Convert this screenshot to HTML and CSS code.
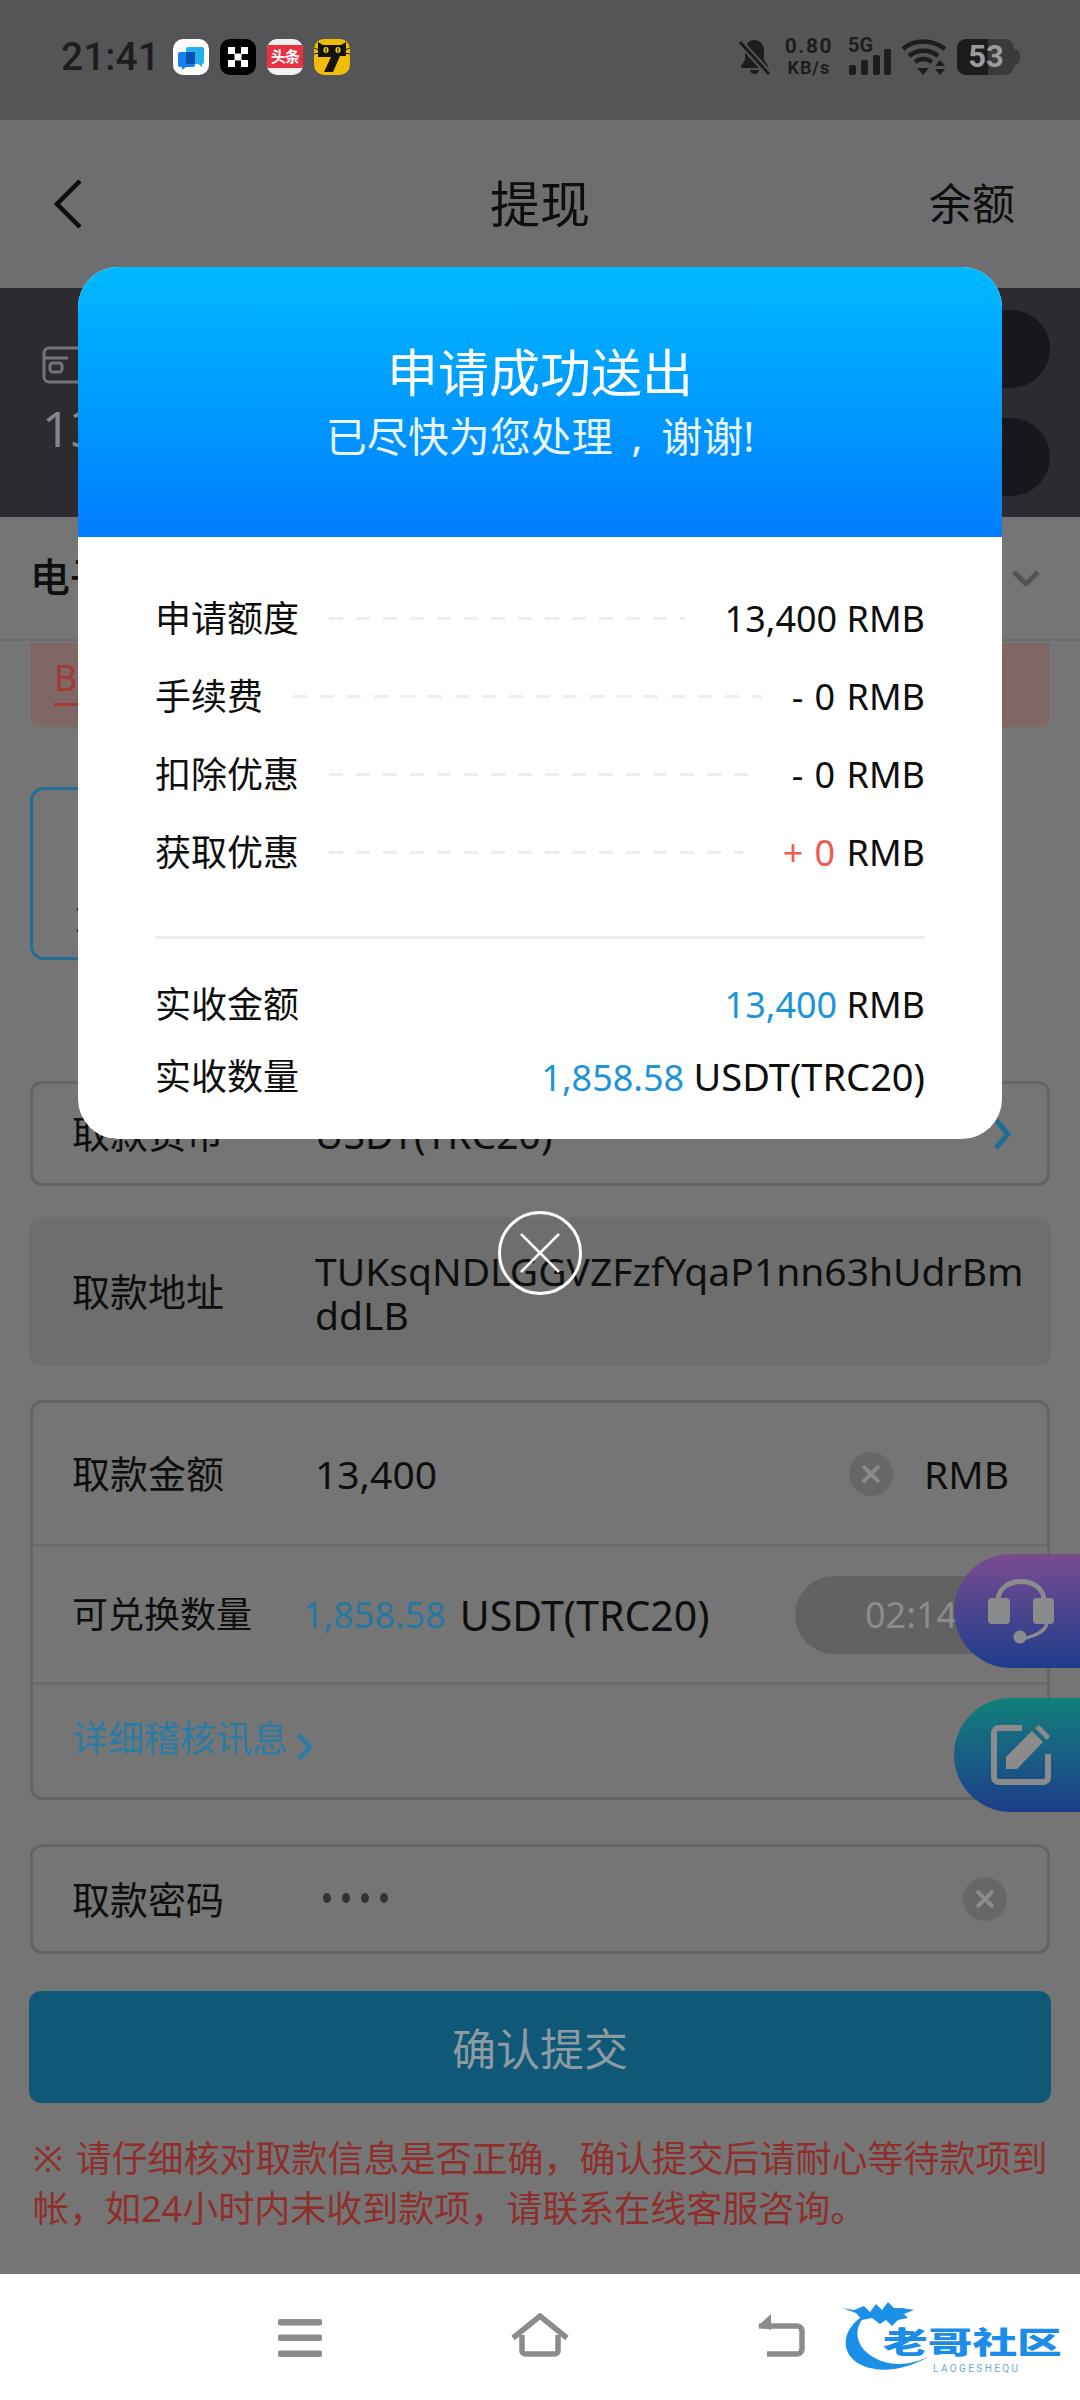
FILE: index.html

```html
<!DOCTYPE html>
<html lang="en">

<head>
  <meta charset="UTF-8">
  <meta name="viewport" content="width=device-width, initial-scale=1.0">
  <title>提现</title>
  <link rel="stylesheet" href="styles.css">
</head>

<body>
  <div class="phone">
    <div class="status-bar">
      <span class="time">21:41</span>
      <div class="app-icons">
        <div class="app-icon app-chat">
          <svg width="36" height="36" viewBox="0 0 36 36">
            <path d="M15 8h14a2 2 0 0 1 2 2v13a2 2 0 0 1-2 2v3l-4-3H15a2 2 0 0 1-2-2V10a2 2 0 0 1 2-2z" fill="#22b0ee"/>
            <path d="M7 13h13a2 2 0 0 1 2 2v11a2 2 0 0 1-2 2h-7l-4 3v-3H7a2 2 0 0 1-2-2V15a2 2 0 0 1 2-2z" fill="#1580f0"/>
            <path d="M13 13h9v12h-7a2 2 0 0 1-2-2z" fill="#0d4fb0"/>
          </svg>
        </div>
        <div class="app-icon app-okx">
          <svg width="36" height="36" viewBox="0 0 36 36" fill="#fff">
            <rect x="8" y="8" width="7" height="7"/>
            <rect x="21" y="8" width="7" height="7"/>
            <rect x="14.5" y="14.5" width="7" height="7"/>
            <rect x="8" y="21" width="7" height="7"/>
            <rect x="21" y="21" width="7" height="7"/>
          </svg>
        </div>
        <div class="app-icon app-news"><span class="news-band">头条</span></div>
        <div class="app-icon app-cat">
          <svg width="36" height="36" viewBox="0 0 36 36">
            <path d="M4 3l5 3h18l5-3v14h-6l-7 16H10l7-15H4z" fill="#16130c"/>
            <path d="M0 9l5 2M0 15l5-1M36 9l-5 2M36 15l-5-1" stroke="#16130c" stroke-width="1"/>
            <ellipse cx="12" cy="11" rx="2.6" ry="3" fill="#e9c62c"/>
            <ellipse cx="24" cy="11" rx="2.6" ry="3" fill="#e9c62c"/>
            <path d="M12 9v4M24 9v4" stroke="#16130c" stroke-width="1"/>
          </svg>
        </div>
      </div>
      <div class="status-right">
        <svg class="bell" width="33" height="36" viewBox="0 0 33 36">
          <path d="M16 1c-6 0-9 5-9 11v9l-4 6v2h27v-2l-4-6v-9c0-6-3-11-10-11z" fill="#1d1d1f"/>
          <path d="M12 31a4.5 4 0 0 0 9 0z" fill="#1d1d1f"/>
          <path d="M2 3l29 32" stroke="#555557" stroke-width="7"/>
          <path d="M2 3l29 32" stroke="#1d1d1f" stroke-width="3"/>
        </svg>
        <div class="net-speed"><span class="net-num">0.80</span><span class="net-unit">KB/s</span></div>
        <div class="signal">
          <span class="signal-label">5G</span>
          <svg width="42" height="26" viewBox="0 0 42 26" fill="#1d1d1f">
            <rect x="0" y="16" width="7" height="10" rx="2"/>
            <rect x="12" y="11" width="7" height="15" rx="2"/>
            <rect x="24" y="6" width="7" height="20" rx="2"/>
            <rect x="35" y="0" width="7" height="26" rx="2"/>
          </svg>
        </div>
        <svg class="wifi" width="46" height="36" viewBox="0 0 46 36" fill="none" stroke="#1d1d1f" stroke-width="4.5">
          <path d="M2 10c11-10 29-10 42 0"/>
          <path d="M8 17c8-7 21-7 29 0"/>
          <path d="M14 23c5-4 12-4 17 0"/>
          <path d="M16 29h12l-6 7z" fill="#1d1d1f" stroke="none"/>
          <path d="M34 27l5-6 5 6zM34 30l5 6 5-6z" fill="#1d1d1f" stroke="none"/>
        </svg>
        <div class="battery"><span class="battery-level"></span><span class="battery-text">53</span></div>
      </div>
    </div>

    <div class="top-bar">
      <svg class="back" width="32" height="50" viewBox="0 0 32 50" fill="none" stroke="#0c0c0c" stroke-width="4.5">
        <path d="M28 2L5 25l23 23"/>
      </svg>
      <span class="top-title">提现</span>
      <span class="top-link">余额</span>
    </div>

    <div class="wallet-band">
      <div class="wallet-info">
        <svg width="60" height="38" viewBox="0 0 60 38" fill="none" stroke="#74747a" stroke-width="3">
          <rect x="2" y="2" width="56" height="34" rx="5"/>
          <path d="M2 12h24"/>
          <rect x="8" y="17" width="12" height="9" rx="3"/>
        </svg>
        <span class="wallet-amount">13,400</span>
      </div>
      <div class="wallet-actions">
        <span class="wallet-pill"></span>
        <span class="wallet-pill"></span>
      </div>
    </div>

    <div class="method-row">
      <span class="method-name">电子钱包</span>
      <svg width="28" height="16" viewBox="0 0 28 16" fill="none" stroke="#525252" stroke-width="5">
        <path d="M2 2l12 12L26 2"/>
      </svg>
    </div>

    <div class="alert"><span class="alert-text">BitPay</span></div>

    <div class="pick-card"><span class="pick-mark"></span><span class="pick-mark"></span></div>

    <div class="field field-coin">
      <span class="field-label">取款货币</span>
      <span class="field-value">USDT(TRC20)</span>
      <svg class="field-arrow" width="18" height="32" viewBox="0 0 18 32" fill="none" stroke="#1f6d93" stroke-width="5">
        <path d="M3 2l12 14L3 30"/>
      </svg>
    </div>

    <div class="address-box">
      <span class="field-label">取款地址</span>
      <span class="address-text">TUKsqNDLGGVZFzfYqaP1nn63hUdrBmddLB</span>
    </div>

    <div class="amount-card">
      <div class="amount-row">
        <span class="field-label">取款金额</span>
        <span class="field-value">13,400</span>
        <span class="clear-btn">
          <svg width="18" height="18" viewBox="0 0 18 18" stroke="#8b8b8b" stroke-width="4"><path d="M1 1l16 16M17 1L1 17"/></svg>
        </span>
        <span class="field-value unit">RMB</span>
      </div>
      <div class="exchange-row">
        <span class="field-label label-small">可兑换数量</span>
        <span class="blue-num">1,858.58</span>
        <span class="coin-name">USDT(TRC20)</span>
        <span class="timer-pill">02:14</span>
      </div>
      <div class="detail-row">
        <span class="detail-link">详细稽核讯息</span>
        <svg width="18" height="28" viewBox="0 0 18 28" fill="none" stroke="#2a7ca5" stroke-width="4.5">
          <path d="M3 2l11 12L3 26"/>
        </svg>
      </div>
    </div>

    <div class="field field-password">
      <span class="field-label">取款密码</span>
      <div class="pass-dots"><i></i><i></i><i></i><i></i></div>
      <span class="clear-btn">
        <svg width="18" height="18" viewBox="0 0 18 18" stroke="#8b8b8b" stroke-width="4"><path d="M1 1l16 16M17 1L1 17"/></svg>
      </span>
    </div>

    <button class="submit-btn">确认提交</button>

    <p class="note">※ 请仔细核对取款信息是否正确，确认提交后请耐心等待款项到帐，如24小时内未收到款项，请联系在线客服咨询。</p>

    <div class="float-btn float-service">
      <svg width="68" height="68" viewBox="0 0 68 68" fill="none" stroke="#8b8b8b" stroke-width="5">
        <path d="M11 24C11 -2 57 -2 57 24"/>
        <rect x="1" y="21" width="22" height="26" rx="4" fill="#8b8b8b" stroke="none"/>
        <rect x="46" y="21" width="21" height="26" rx="4" fill="#8b8b8b" stroke="none"/>
        <path d="M60 46c-2 11-20 15-26 16" stroke-width="3.5"/>
        <circle cx="33" cy="60" r="6.5" fill="#8b8b8b" stroke="none"/>
      </svg>
    </div>
    <div class="float-btn float-edit">
      <svg width="62" height="62" viewBox="0 0 62 62" fill="none" stroke="#8b8b8b" stroke-width="6">
        <path d="M32 4H9a5 5 0 0 0-5 5v44a5 5 0 0 0 5 5h44a5 5 0 0 0 5-5V30"/>
        <path d="M16 45V33L42 7l11 11-26 27z" fill="#8b8b8b" stroke="none"/>
        <path d="M45 4l4-3 11 11-3 4z" fill="#8b8b8b" stroke="none"/>
      </svg>
    </div>

    <div class="nav-bar">
      <svg class="nav-menu" width="44" height="38" viewBox="0 0 44 38" fill="#8c8c8c">
        <rect width="44" height="6.5" rx="2"/>
        <rect y="15.5" width="44" height="6.5" rx="2"/>
        <rect y="31.5" width="44" height="6.5" rx="2"/>
      </svg>
      <svg class="nav-home" width="58" height="44" viewBox="0 0 58 44" fill="none" stroke="#8c8c8c" stroke-width="5.5">
        <path d="M2 25L29 3l27 22"/>
        <path d="M11 22v16a3 3 0 0 0 3 3h30a3 3 0 0 0 3-3V22"/>
      </svg>
      <svg class="nav-back" width="48" height="44" viewBox="0 0 48 44" fill="none" stroke="#8c8c8c" stroke-width="5.5">
        <path d="M2 13h38a5 5 0 0 1 5 5v18a5 5 0 0 1-5 5H10"/>
        <path d="M14 1L1 13l13 4z" fill="#8c8c8c" stroke="none"/>
      </svg>
      <div class="site-logo">
        <svg class="logo-dragon" width="120" height="80" viewBox="0 0 120 80" fill="#1c8fe6">
          <path d="M24 16C6 26 -2 44 8 58c10 14 42 22 80 0-28 14-52 8-66-6-10-12-8-24 2-36z"/>
          <path d="M0 10l12 2 10-4 6 6 6-8 6 6 6-8 6 6h8l12 2-10 4 4 4-10 2-6 6-6-6-6 4-8-6-10 2-6-7z"/>
        </svg>
        <span class="logo-name">老哥社区</span>
        <span class="logo-sub">LAOGESHEQU</span>
      </div>
    </div>

    <div class="overlay">
      <div class="dialog">
        <div class="dialog-head">
          <div class="dialog-title">申请成功送出</div>
          <div class="dialog-sub">已尽快为您处理 , 谢谢!</div>
        </div>
        <div class="dialog-body">
          <div class="sum-row">
            <span>申请额度</span><span class="dash dash-wide"></span><span>13,400 RMB</span>
          </div>
          <div class="sum-row">
            <span>手续费</span><span class="dash"></span><span class="sum-gap">- 0 RMB</span>
          </div>
          <div class="sum-row">
            <span>扣除优惠</span><span class="dash dash-wide"></span><span class="sum-gap">- 0 RMB</span>
          </div>
          <div class="sum-row">
            <span>获取优惠</span><span class="dash dash-wide"></span><span class="sum-gap"><em class="red">+ 0</em> RMB</span>
          </div>
          <div class="divider"></div>
          <div class="sum-row total-row">
            <span>实收金额</span><span><em class="blue">13,400</em> RMB</span>
          </div>
          <div class="sum-row total-row">
            <span>实收数量</span><span><em class="blue">1,858.58</em> <span class="sum-coin">USDT(TRC20)</span></span>
          </div>
        </div>
      </div>
      <div class="close-btn">
        <svg width="42" height="42" viewBox="0 0 42 42" stroke="#fff" stroke-width="2.5"><path d="M2 2l38 38M40 2L2 40"/></svg>
      </div>
    </div>
  </div>
</body>

</html>
```

FILE: styles.css

```css
* {
  box-sizing: border-box;
}

body {
  margin: 0;
  padding: 0;
  background: #757575;
  font-family: 'Noto Sans', 'Noto Sans CJK SC', sans-serif;
  color: #0e0e0e;
}

.phone {
  position: relative;
  width: 1080px;
  height: 2400px;
  overflow: hidden;
  background: #757575;
}

/* status bar */
.status-bar {
  height: 120px;
  background: #555557;
  display: flex;
  align-items: center;
  padding: 0 60px 6px 61px;
  color: #1d1d1f;
}

.time {
  font-family: Roboto, sans-serif;
  font-size: 39px;
  font-weight: 500;
  width: 112px;
}

.app-icons {
  display: flex;
  gap: 11px;
}

.app-icon {
  width: 36px;
  height: 36px;
  border-radius: 10px;
  overflow: hidden;
}

.app-chat {
  background: #fff;
}

.app-okx {
  background: #000;
}

.app-news {
  background: #f4f0f0;
  padding-top: 6px;
}

.news-band {
  display: block;
  height: 23px;
  background: #e8303f;
  color: #fff;
  font-size: 15px;
  line-height: 23px;
  font-weight: 700;
  text-align: center;
  letter-spacing: -1px;
}

.app-cat {
  background: #efbc08;
}

.status-right {
  margin-left: auto;
  display: flex;
  align-items: center;
}

.bell {
  margin-right: 14px;
}

.net-speed {
  display: flex;
  flex-direction: column;
  align-items: center;
  font-family: Roboto, sans-serif;
  font-weight: 700;
  line-height: 21px;
  margin-right: 16px;
}

.net-num {
  font-size: 21px;
  letter-spacing: 1.5px;
}

.net-unit {
  font-size: 18px;
  letter-spacing: 1px;
}

.signal {
  position: relative;
  width: 42px;
  height: 36px;
  margin-right: 10px;
  display: flex;
  align-items: flex-end;
}

.signal-label {
  position: absolute;
  left: -1px;
  top: -4px;
  font-family: Roboto, sans-serif;
  font-weight: 700;
  font-size: 20px;
  line-height: 20px;
}

.wifi {
  margin-right: 10px;
}

.battery {
  position: relative;
  width: 57px;
  height: 36px;
  margin-right: 6px;
  border-radius: 9px;
  background: #3a3a3c;
}

.battery::after {
  content: "";
  position: absolute;
  right: -6px;
  top: 10px;
  width: 6px;
  height: 16px;
  border-radius: 0 6px 6px 0;
  background: #3a3a3c;
}

.battery-level {
  position: absolute;
  left: 0;
  top: 0;
  bottom: 0;
  width: 31px;
  border-radius: 9px 0 0 9px;
  background: #1c1c1e;
}

.battery-text {
  position: relative;
  display: block;
  width: 48px;
  margin-left: 5px;
  text-align: center;
  color: #9c9c9c;
  font-family: Roboto, sans-serif;
  font-weight: 700;
  font-size: 31px;
  line-height: 36px;
}

/* top bar */
.top-bar {
  position: relative;
  height: 168px;
  background: #6e6e70;
  display: flex;
  align-items: center;
  justify-content: space-between;
  padding: 0 65px 0 52px;
}

.top-title {
  position: absolute;
  left: 0;
  right: 0;
  top: 50px;
  text-align: center;
  font-size: 50px;
  line-height: 68px;
  pointer-events: none;
}

.top-link {
  font-size: 43px;
  padding-bottom: 6px;
}

/* wallet band */
.wallet-band {
  height: 229px;
  background: #2b2b30;
  display: flex;
  justify-content: space-between;
  padding: 22px 30px 21px 42px;
}

.wallet-info {
  display: flex;
  flex-direction: column;
  gap: 14px;
  padding-top: 36px;
  color: #85858a;
}

.wallet-amount {
  font-size: 50px;
  line-height: 60px;
}

.wallet-actions {
  display: flex;
  flex-direction: column;
  justify-content: space-between;
}

.wallet-pill {
  display: block;
  width: 140px;
  height: 78px;
  border-radius: 40px;
  background: #17171c;
}

.method-row {
  height: 124px;
  padding: 0 40px 0 30px;
  display: flex;
  align-items: center;
  justify-content: space-between;
  border-bottom: 2px solid #6c6c6c;
  font-size: 40px;
  font-weight: 500;
}

.method-name {
  padding-bottom: 6px;
}

.alert {
  height: 84px;
  margin: 2px 30px 0;
  padding: 10px 24px;
  background: #7f6765;
  border-radius: 0 0 10px 10px;
}

.alert-text {
  display: inline-block;
  color: #a33a33;
  font-size: 36px;
  line-height: 50px;
  border-bottom: 3px solid #a33a33;
}

.pick-card {
  width: 300px;
  height: 173px;
  margin: 60px 0 0 30px;
  padding: 118px 0 0 44px;
  border: 3px solid #1f6f96;
  border-radius: 14px;
}

.pick-mark {
  display: block;
  width: 6px;
  height: 3px;
  margin-bottom: 18px;
  background: #222;
}

/* form fields */
.field {
  margin: 121px 30px 0;
  height: 105px;
  border: 3px solid #646464;
  border-radius: 12px;
  padding: 0 40px 0 39px;
  display: flex;
  align-items: center;
}

.field-label {
  width: 243px;
  flex-shrink: 0;
  font-size: 38px;
  padding-bottom: 4px;
}

.field-value {
  font-size: 39px;
}

.field-arrow {
  margin-left: auto;
  margin-right: -4px;
}

.address-box {
  margin: 31px 29px 0;
  height: 149px;
  background: #6e6e6e;
  border-radius: 12px;
  padding: 0 14px 0 43px;
  display: flex;
  align-items: center;
}

.address-text {
  font-size: 39px;
  line-height: 44px;
  word-break: break-all;
  padding-top: 2px;
}

.amount-card {
  margin: 34px 30px 0;
  height: 400px;
  border: 3px solid #646464;
  border-radius: 12px;
}

.amount-row {
  height: 144px;
  padding: 0 38px 0 39px;
  display: flex;
  align-items: center;
  border-bottom: 3px solid #6b6b6b;
}

.clear-btn {
  width: 44px;
  height: 44px;
  border-radius: 50%;
  background: #676767;
  display: flex;
  align-items: center;
  justify-content: center;
  margin-left: auto;
}

.unit {
  margin-left: 31px;
}

.exchange-row {
  height: 138px;
  padding: 0 0 0 39px;
  display: flex;
  align-items: center;
  border-bottom: 3px solid #6b6b6b;
}

.label-small {
  width: 231px;
  font-size: 36px;
}

.blue-num {
  font-size: 36px;
  color: #2678a3;
  margin-right: 14px;
}

.coin-name {
  font-size: 41px;
}

.timer-pill {
  margin-left: auto;
  width: 252px;
  height: 78px;
  border-radius: 39px 0 0 39px;
  background: #626262;
  color: #8c8c8c;
  font-size: 36px;
  line-height: 78px;
  padding-left: 70px;
}

.detail-row {
  padding: 29px 0 0 39px;
  display: flex;
  align-items: flex-start;
  gap: 8px;
}

.detail-link {
  color: #2a7ca5;
  font-size: 36px;
  line-height: 50px;
}

.detail-row svg {
  margin-top: 19px;
}

.field-password {
  margin-top: 44px;
  height: 110px;
}

.pass-dots {
  display: flex;
  gap: 11px;
  margin-left: 8px;
  margin-bottom: 3px;
}

.pass-dots i {
  width: 8px;
  height: 10px;
  border-radius: 50%;
  background: #333;
}

.submit-btn {
  display: block;
  width: 1022px;
  height: 112px;
  margin: 37px 0 0 29px;
  border: none;
  border-radius: 12px;
  background: #0f5878;
  color: #8e9aa1;
  font-family: inherit;
  font-size: 44px;
}

.note {
  margin: 31px 26px 0 33px;
  color: #8f2f2c;
  font-size: 36px;
  line-height: 50px;
  word-spacing: 3px;
}

/* floating buttons */
.float-btn {
  position: absolute;
  left: 954px;
  width: 126px;
  height: 114px;
  border-radius: 57px 0 0 57px;
  padding-left: 33px;
  display: flex;
  align-items: center;
}

.float-service {
  top: 1554px;
  background: linear-gradient(to bottom, #7a4c8f, #1e3d8c);
}

.float-edit {
  top: 1698px;
  background: linear-gradient(to bottom, #12807a, #1e3d8c);
  padding-left: 36px;
}

/* bottom nav */
.nav-bar {
  position: absolute;
  left: 0;
  right: 0;
  top: 2274px;
  height: 126px;
  background: #fff;
}

.nav-menu,
.nav-home,
.nav-back,
.site-logo {
  position: absolute;
}

.nav-menu {
  left: 278px;
  top: 45px;
}

.nav-home {
  left: 511px;
  top: 39px;
}

.nav-back {
  left: 757px;
  top: 39px;
}

.site-logo {
  left: 842px;
  top: 24px;
  width: 225px;
  height: 80px;
}

.logo-dragon {
  position: absolute;
  left: 0;
  top: 0;
}

.logo-name {
  position: absolute;
  left: 41px;
  top: 28px;
  width: 120px;
  height: 32px;
  color: #1b8de8;
  font-size: 30px;
  line-height: 32px;
  font-weight: 900;
  white-space: nowrap;
  transform: scaleX(1.49);
  transform-origin: left center;
}

.logo-sub {
  position: absolute;
  left: 91px;
  top: 65px;
  color: #6aa9dc;
  font-family: Roboto, sans-serif;
  font-size: 10px;
  line-height: 12px;
  letter-spacing: 2.4px;
}

/* success dialog */
.overlay {
  position: absolute;
  left: 0;
  top: 267px;
  width: 1080px;
  display: flex;
  flex-direction: column;
  align-items: center;
}

.dialog {
  width: 924px;
  border-radius: 40px;
  overflow: hidden;
  background: #fff;
}

.dialog-head {
  height: 270px;
  background: linear-gradient(to bottom, #00b9ff, #007dff);
  color: #fff;
  text-align: center;
  padding-top: 72px;
}

.dialog-title {
  font-size: 51px;
  line-height: 66px;
}

.dialog-sub {
  font-size: 41px;
  line-height: 62px;
  color: #e8f6ff;
  word-spacing: 8px;
}

.dialog-body {
  padding: 42px 77px 27px;
}

.sum-row {
  height: 78px;
  display: flex;
  align-items: center;
  justify-content: space-between;
  font-size: 36px;
  white-space: nowrap;
}

.sum-row > span:first-child {
  padding-bottom: 3px;
}

.total-row {
  height: 72px;
}

.sum-row em {
  font-style: normal;
}

.sum-gap {
  word-spacing: 2px;
}

.sum-coin {
  font-size: 38px;
}

.red {
  color: #ef5a50;
}

.blue {
  color: #1c94d8;
}

.dash {
  flex: 1;
  height: 3px;
  margin: 0 30px;
  background: repeating-linear-gradient(to right, #eeeeee 0, #eeeeee 14px, transparent 14px, transparent 27px);
}

.dash-wide {
  margin-right: 40px;
}

.divider {
  height: 3px;
  margin-top: 45px;
  margin-bottom: 29px;
  background: #eeeeee;
}

.close-btn {
  width: 84px;
  height: 84px;
  margin-top: 72px;
  border: 3px solid #fff;
  border-radius: 50%;
  display: flex;
  align-items: center;
  justify-content: center;
}
```
